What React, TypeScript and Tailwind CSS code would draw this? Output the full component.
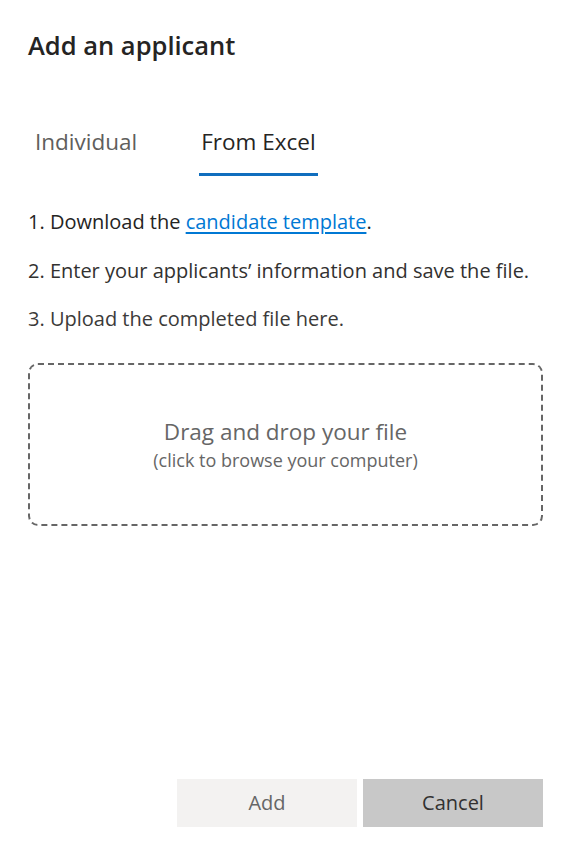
import { useState } from 'react';

const font = { fontFamily: '"Open Sans", "Noto Sans", sans-serif' };

export default function App() {
  const [tab, setTab] = useState<'individual' | 'excel'>('excel');

  const tabClass = (active: boolean) =>
    active
      ? 'border-b-[3px] border-[#106ebe] text-[#252423]'
      : 'border-b-[3px] border-transparent text-[#605e5c]';

  return (
    <div style={font} className="flex h-[849px] flex-col bg-white pl-[28px] pr-[20px] text-[#323130]">
      <h1 className="pt-[28px] text-[25.5px] font-semibold leading-[34px] text-[#252423]">Add an applicant</h1>

      <div className="mt-[65px] flex">
        <button
          onClick={() => setTab('individual')}
          className={`ml-[5px] px-[2px] pb-[16px] text-[22.5px] leading-[30px] ${tabClass(tab === 'individual')}`}
        >
          Individual
        </button>
        <button
          onClick={() => setTab('excel')}
          className={`ml-[60px] px-[2px] pb-[16px] text-[22.5px] leading-[30px] ${tabClass(tab === 'excel')}`}
        >
          From Excel
        </button>
      </div>

      <ol className="mt-[32px] flex flex-col gap-[20.5px] text-[20px] leading-[28px]">
        <li className="text-[#252423]">
          1. Download the{' '}
          <a href="#" className="text-[#0078d4] underline underline-offset-[3px]">
            candidate template
          </a>
          .
        </li>
        <li className="text-[#323130]">2. Enter your applicants’ information and save the file.</li>
        <li className="text-[#3b3a39]">3. Upload the completed file here.</li>
      </ol>

      <div className="mt-[30px] flex h-[163px] cursor-pointer flex-col items-center justify-center rounded-[10px] border-2 border-dashed border-[#666666] text-[#666666]">
        <p className="text-[22.5px] leading-[30px]">Drag and drop your file</p>
        <p className="text-[18px] leading-[26px]">(click to browse your computer)</p>
      </div>

      <div className="mt-auto mb-[22px] flex justify-end gap-[6px]">
        <button className="h-[48px] w-[180px] bg-[#f3f2f1] text-[20px] text-[#666666]">Add</button>
        <button className="h-[48px] w-[180px] bg-[#c8c8c8] text-[20px] text-[#323130]">Cancel</button>
      </div>
    </div>
  );
}
